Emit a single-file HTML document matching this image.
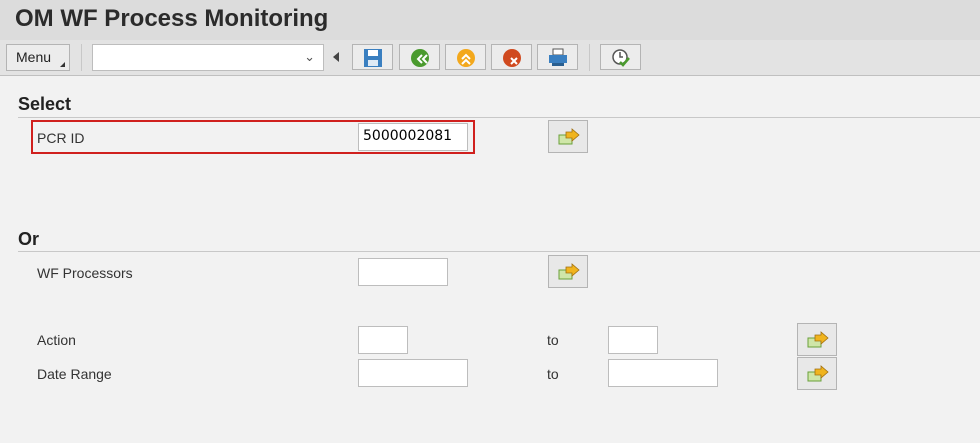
<!DOCTYPE html><html><head><style>
body{margin:0;width:980px;height:443px;background:#f2f2f2;font-family:"Liberation Sans",Arial,sans-serif;position:relative;overflow:hidden}
.a{position:absolute}
.hdr{left:0;top:0;width:980px;height:40px;background:#dcdcdc}
.tb{left:0;top:40px;width:980px;height:35px;background:#e3e3e3;border-bottom:1px solid #c0c0c0}
.btn{position:absolute;top:44px;height:26px;width:41px;border:1px solid #b4b4b4;background:#ececec;box-sizing:border-box}
.btn svg{position:absolute;left:10px;top:3px}
.lbl{position:absolute;font-size:14px;color:#333}
.inp{position:absolute;background:#fff;border:1px solid #bdbdbd;box-sizing:border-box;height:28px}
.go{position:absolute;width:40px;height:33px;border:1px solid #b4b4b4;background:#e8e8e8;box-sizing:border-box}
.go svg{position:absolute;left:9px;top:7px}
.sec{position:absolute;font-size:18px;font-weight:bold;color:#222}
.line{position:absolute;left:18px;width:962px;height:1px;background:#c8c8c8}
</style></head><body>
<div class="a hdr"></div>
<div class="a tb"></div>
<div class="a" style="left:15px;top:5px;font-size:24px;font-weight:bold;color:#2b2b2b">OM WF Process Monitoring</div>
<div class="a" style="left:6px;top:44px;width:64px;height:27px;border:1px solid #b4b4b4;background:#ececec;box-sizing:border-box;font-size:14px;color:#222;padding:4px 0 0 9px">Menu<span style="position:absolute;right:4px;bottom:3px;width:0;height:0;border-left:5px solid transparent;border-bottom:5px solid #333"></span></div>
<div class="a" style="left:81px;top:44px;width:1px;height:27px;background:#c8c8c8"></div>
<div class="a" style="left:92px;top:44px;width:232px;height:27px;background:#fff;border:1px solid #bdbdbd;box-sizing:border-box"><span style="position:absolute;right:8px;top:4px;font-size:13px;color:#555">&#8964;</span></div>
<div class="a" style="left:333px;top:52px;width:0;height:0;border-top:5px solid transparent;border-bottom:5px solid transparent;border-right:6px solid #444"></div>
<div class="btn" style="left:352px"><svg width="20" height="20"><rect x="1" y="1" width="18" height="18" fill="#3a7fc0"/><rect x="5" y="2" width="10" height="6" fill="#fff"/><rect x="5" y="12" width="10" height="6" fill="#dfeaf5"/></svg></div>
<div class="btn" style="left:399px"><svg width="20" height="20"><circle cx="10" cy="10" r="9" fill="#4a9a2e"/><path d="M12 7l-4 4 4 4M17 7l-4 4 4 4" stroke="#fff" stroke-width="2" fill="none"/></svg></div>
<div class="btn" style="left:445px"><svg width="20" height="20"><circle cx="10" cy="10" r="9" fill="#f3a81c"/><path d="M6 11l4-4 4 4M6 16l4-4 4 4" stroke="#fff" stroke-width="2" fill="none"/></svg></div>
<div class="btn" style="left:491px"><svg width="20" height="20"><circle cx="10" cy="10" r="9" fill="#d04a1f"/><path d="M9 10l6 6M15 10l-6 6" stroke="#fff" stroke-width="2"/></svg></div>
<div class="btn" style="left:537px"><svg width="20" height="20"><rect x="5" y="1" width="10" height="6" fill="#fff" stroke="#555"/><rect x="1" y="7" width="18" height="8" fill="#3a7fc0"/><rect x="4" y="15" width="12" height="3" fill="#2a5f90"/></svg></div>
<div class="a" style="left:589px;top:44px;width:1px;height:27px;background:#c8c8c8"></div>
<div class="btn" style="left:600px"><svg width="20" height="20"><circle cx="9" cy="9" r="7" fill="#fff" stroke="#555" stroke-width="1.5"/><path d="M9 4v5h3" stroke="#555" stroke-width="1.5" fill="none"/><path d="M9 14l3 3 6-7" stroke="#4a9a2e" stroke-width="2.5" fill="none"/></svg></div>

<div class="sec" style="left:18px;top:94px">Select</div>
<div class="line" style="top:117px"></div>
<div class="a" style="left:31px;top:120px;width:444px;height:34px;border:2px solid #d0201e;box-sizing:border-box"></div>
<div class="lbl" style="left:37px;top:130px">PCR ID</div>
<div class="inp" style="left:358px;top:123px;width:110px;height:28px;font-size:14px;padding:4px 0 0 4px;color:#000;font-family:'DejaVu Sans',sans-serif">5000002081</div>
<div class="go" style="left:548px;top:120px"><svg width="22" height="18"><rect x="1" y="7" width="13" height="9" fill="#cfe6a8" stroke="#6aa03a"/><path d="M8 4h6V1l7 6-7 6V10H8z" fill="#f0b41e" stroke="#a07010" stroke-width=".8"/></svg></div>

<div class="sec" style="left:18px;top:229px">Or</div>
<div class="line" style="top:251px"></div>
<div class="lbl" style="left:37px;top:265px">WF Processors</div>
<div class="inp" style="left:358px;top:258px;width:90px"></div>
<div class="go" style="left:548px;top:255px"><svg width="22" height="18"><rect x="1" y="7" width="13" height="9" fill="#cfe6a8" stroke="#6aa03a"/><path d="M8 4h6V1l7 6-7 6V10H8z" fill="#f0b41e" stroke="#a07010" stroke-width=".8"/></svg></div>

<div class="lbl" style="left:37px;top:332px">Action</div>
<div class="inp" style="left:358px;top:326px;width:50px"></div>
<div class="lbl" style="left:547px;top:332px">to</div>
<div class="inp" style="left:608px;top:326px;width:50px"></div>
<div class="go" style="left:797px;top:323px"><svg width="22" height="18"><rect x="1" y="7" width="13" height="9" fill="#cfe6a8" stroke="#6aa03a"/><path d="M8 4h6V1l7 6-7 6V10H8z" fill="#f0b41e" stroke="#a07010" stroke-width=".8"/></svg></div>

<div class="lbl" style="left:37px;top:366px">Date Range</div>
<div class="inp" style="left:358px;top:359px;width:110px"></div>
<div class="lbl" style="left:547px;top:366px">to</div>
<div class="inp" style="left:608px;top:359px;width:110px"></div>
<div class="go" style="left:797px;top:357px"><svg width="22" height="18"><rect x="1" y="7" width="13" height="9" fill="#cfe6a8" stroke="#6aa03a"/><path d="M8 4h6V1l7 6-7 6V10H8z" fill="#f0b41e" stroke="#a07010" stroke-width=".8"/></svg></div>
</body></html>
